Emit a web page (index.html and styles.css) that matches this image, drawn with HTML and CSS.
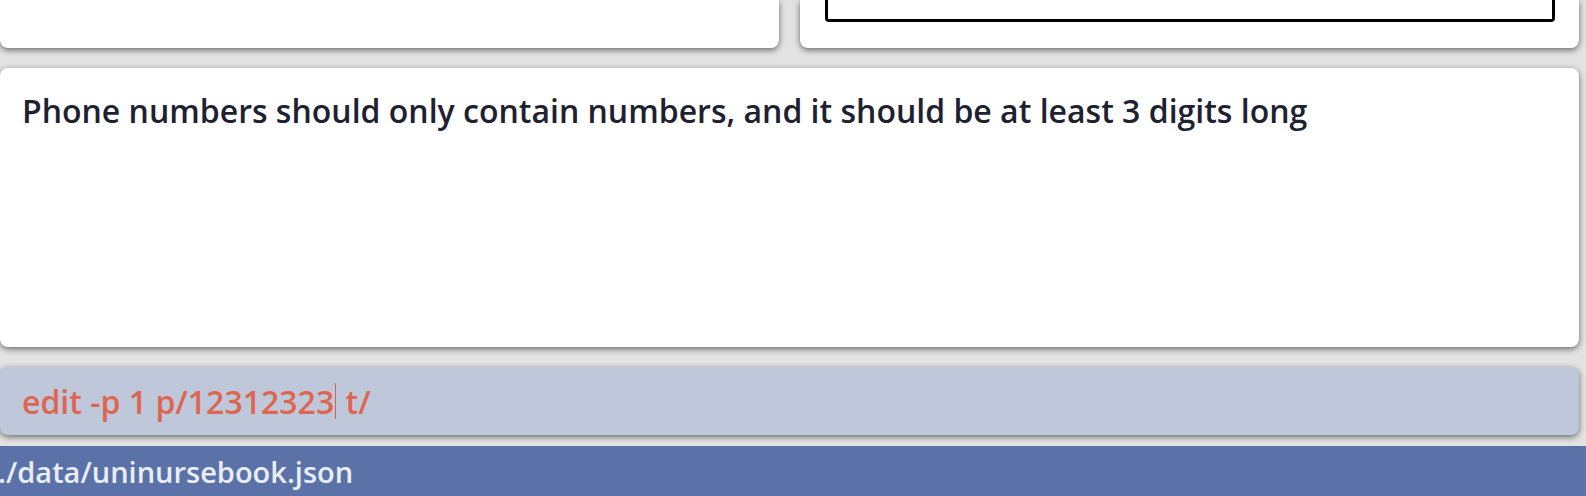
FILE: index.html
```html
<!DOCTYPE html>
<html lang="en">
<head>
<meta charset="utf-8">
<title>UniNurseBook</title>
<link rel="stylesheet" href="styles.css">
</head>
<body>
<div class="app">
  <div class="top-row">
    <div class="card card-left"></div>
    <div class="card card-right">
      <div class="inner-box"></div>
    </div>
  </div>
  <div class="result-box">
    <p class="result-text">Phone numbers should only contain numbers, and it should be at least 3 digits long</p>
  </div>
  <div class="command-box">
    <span class="command-text">edit -p 1 p/12312323</span><span class="caret"></span><span class="command-text"> t/</span>
  </div>
  <div class="status-bar">
    <span class="status-text">./data/uninursebook.json</span>
  </div>
</div>
</body>
</html>
```

FILE: styles.css
```css
html, body {
  margin: 0;
  padding: 0;
}
body {
  width: 1586px;
  height: 496px;
  overflow: hidden;
  background: #e3e3e3;
  font-family: "Open Sans", "Noto Sans", sans-serif;
}
.app {
  display: flex;
  flex-direction: column;
  height: 496px;
}
.top-row {
  display: flex;
  gap: 21px;
  height: 48px;
  padding-right: 7px;
}
.card {
  background: #ffffff;
  border-radius: 0 0 8px 8px;
  box-shadow: 0 2px 6px rgba(0, 0, 0, 0.55);
}
.card-left {
  width: 779px;
}
.card-right {
  flex: 1;
  padding: 0 24px 0 25px;
}
.inner-box {
  height: 19px;
  border: 3px solid #000000;
  border-top: none;
  border-radius: 0 0 4px 4px;
}
.result-box {
  margin-top: 20px;
  margin-right: 7px;
  height: 279px;
  background: #ffffff;
  border-radius: 8px;
  box-shadow: 0 2px 6px rgba(0, 0, 0, 0.55);
  padding: 0 22px;
}
.result-text {
  margin: 0;
  padding-top: 23px;
  font-size: 32px;
  font-weight: 600;
  line-height: 40px;
  color: #1e2130;
}
.command-box {
  margin-top: 20px;
  margin-right: 7px;
  height: 68px;
  background: #bfc8db;
  border-radius: 8px;
  box-shadow: 0 2px 6px rgba(0, 0, 0, 0.55);
  padding: 0 22px;
  display: flex;
  align-items: center;
}
.command-text {
  font-size: 32px;
  font-weight: 600;
  color: #dd6650;
  white-space: pre;
}
.caret {
  display: inline-block;
  width: 1px;
  height: 36px;
  background: #d8624c;
  margin: 0 1px;
}
.status-bar {
  margin-top: 11px;
  flex: 1;
  background: #5a72a8;
  display: flex;
  align-items: center;
}
.status-text {
  font-size: 29px;
  font-weight: 600;
  color: #e9edf5;
  margin-left: -2px;
}
```
